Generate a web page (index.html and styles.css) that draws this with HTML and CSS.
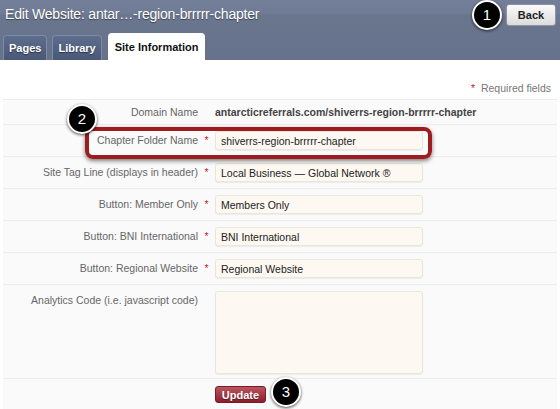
FILE: index.html
```html
<!DOCTYPE html>
<html lang="en">
<head>
  <meta charset="UTF-8" />
  <title>Edit Website</title>
  <link rel="stylesheet" href="styles.css">
</head>
<body>
  <div class="header">
    <div class="title-row">
      <h1 class="title">Edit Website: antar…-region-brrrrr-chapter</h1>
      <button class="back-btn">Back</button>
      <span class="step step-1">1</span>
    </div>
    <div class="tabs">
      <a class="tab">Pages</a>
      <a class="tab">Library</a>
      <a class="tab active">Site Information</a>
    </div>
  </div>

  <div class="content">
    <p class="required-note"><span class="req">*</span> Required fields</p>

    <div class="form">
      <div class="row row-short">
        <label class="label">Domain Name</label>
        <span class="mark"></span>
        <span class="value">antarcticreferrals.com/shiverrs-region-brrrrr-chapter</span>
      </div>
      <div class="row">
        <label class="label">Chapter Folder Name</label>
        <span class="mark req">*</span>
        <input class="field" type="text" value="shiverrs-region-brrrrr-chapter" />
      </div>
      <div class="row">
        <label class="label">Site Tag Line (displays in header)</label>
        <span class="mark req">*</span>
        <input class="field" type="text" value="Local Business — Global Network ®" />
      </div>
      <div class="row">
        <label class="label">Button: Member Only</label>
        <span class="mark req">*</span>
        <input class="field" type="text" value="Members Only" />
      </div>
      <div class="row">
        <label class="label">Button: BNI International</label>
        <span class="mark req">*</span>
        <input class="field" type="text" value="BNI International" />
      </div>
      <div class="row">
        <label class="label">Button: Regional Website</label>
        <span class="mark req">*</span>
        <input class="field" type="text" value="Regional Website" />
      </div>
      <div class="row row-tall">
        <label class="label">Analytics Code (i.e. javascript code)</label>
        <span class="mark"></span>
        <textarea class="field area"></textarea>
      </div>
      <div class="actions">
        <button class="update-btn">Update</button>
      </div>

      <div class="highlight"></div>
      <span class="step step-2">2</span>
      <span class="step step-3">3</span>
    </div>
  </div>
</body>
</html>
```

FILE: styles.css
```css
body {
  margin: 0;
  font-family: "Liberation Sans", Arial, sans-serif;
  background: #fff;
  width: 560px;
  height: 409px;
  overflow: hidden;
}

.header {
  height: 60px;
  background: linear-gradient(to bottom, #737f98 0, #707c95 14px, #6a768e 15px, #66728b 60px);
  display: flex;
  flex-direction: column;
  justify-content: space-between;
}

.title-row {
  position: relative;
  display: flex;
  justify-content: space-between;
  align-items: flex-start;
  padding: 4px 4px 0 5px;
}

.title {
  margin: 2px 0 0;
  font-size: 14px;
  font-weight: normal;
  color: #fff;
  text-shadow: 0 1px 1px rgba(0,0,0,0.45);
  letter-spacing: -0.2px;
}

.back-btn {
  width: 50px;
  height: 22px;
  padding: 0;
  border: 1px solid #8b93a5;
  border-radius: 3px;
  background: linear-gradient(to bottom, #fafafa, #dcdcdc);
  font-family: inherit;
  font-size: 11px;
  font-weight: bold;
  color: #222;
}

.tabs {
  display: flex;
  align-items: flex-end;
  gap: 5px;
  padding-left: 3px;
}

.tab {
  height: 24px;
  line-height: 25px;
  padding: 0 5px;
  border: 1px solid #7f8ba5;
  border-bottom: none;
  border-radius: 4px 4px 0 0;
  background: linear-gradient(to bottom, #5d6d8d, #4a5877);
  color: #fff;
  font-size: 11px;
  font-weight: bold;
  text-shadow: 0 1px 1px rgba(0,0,0,0.5);
}

.tab.active {
  height: 26px;
  line-height: 27px;
  margin-left: 1px;
  padding: 0 6px;
  border-color: #fff;
  background: #fff;
  color: #111;
  text-shadow: none;
}

.content {
  padding: 20px 3px 0;
}

.required-note {
  margin: 0;
  height: 19px;
  line-height: 17px;
  text-align: right;
  font-size: 10.5px;
  color: #777;
  padding-right: 6px;
}

.req {
  color: #c0262b;
  margin-right: 3px;
}

.form {
  position: relative;
}

.row {
  display: grid;
  grid-template-columns: 195px 17px 208px;
  align-items: start;
  height: 31px;
  border-top: 1px solid #ececec;
  background: #fafafa;
}

.row-short {
  height: 24px;
  align-items: center;
}

.row-tall {
  height: 93px;
}

.label {
  text-align: right;
  font-size: 10.5px;
  color: #666;
  padding-top: 9px;
}

.row-short .label {
  padding-top: 0;
}

.mark {
  text-align: center;
  font-size: 10.5px;
  padding-top: 9px;
  margin: 0;
}

.value {
  font-size: 10.5px;
  font-weight: bold;
  color: #444;
  white-space: nowrap;
}

.field {
  box-sizing: border-box;
  height: 19px;
  margin-top: 6px;
  padding: 0 5px;
  border: 1px solid #ebe6dc;
  border-radius: 3px;
  background: #fdf8f1;
  font-family: inherit;
  font-size: 10.5px;
  color: #222;
  box-shadow: 0 1px 1px rgba(0,0,0,0.06);
}

.area {
  height: 83px;
  margin-top: 6px;
  resize: none;
}

.actions {
  display: flex;
  align-items: flex-start;
  border-top: 1px solid #ececec;
  background: #fafafa;
  height: 31px;
  padding-left: 212px;
  padding-top: 7px;
  box-sizing: border-box;
}

.update-btn {
  width: 51px;
  height: 17px;
  padding: 0;
  border: 1px solid #7a1a24;
  border-radius: 3px;
  background: linear-gradient(to bottom, #bb5560, #8c1f2c);
  color: #fff;
  font-family: inherit;
  font-size: 11px;
  font-weight: bold;
  text-shadow: 0 1px 1px rgba(0,0,0,0.4);
}

.step {
  position: absolute;
  width: 26px;
  height: 26px;
  border: 2px solid #fff;
  border-radius: 50%;
  background: #000;
  color: #fff;
  font-size: 15px;
  line-height: 26px;
  text-align: center;
  box-shadow: 0 1px 3px rgba(0,0,0,0.7);
}

.step-1 {
  left: 472px;
  top: 0;
}

.step-2 {
  left: 64px;
  top: 5px;
}

.step-3 {
  left: 268px;
  top: 278px;
}

.highlight {
  position: absolute;
  left: 82px;
  top: 28px;
  width: 339px;
  height: 24px;
  border: 4px solid #9e1b20;
  border-radius: 8px;
  box-shadow: 0 2px 4px rgba(0,0,0,0.5);
}
```
